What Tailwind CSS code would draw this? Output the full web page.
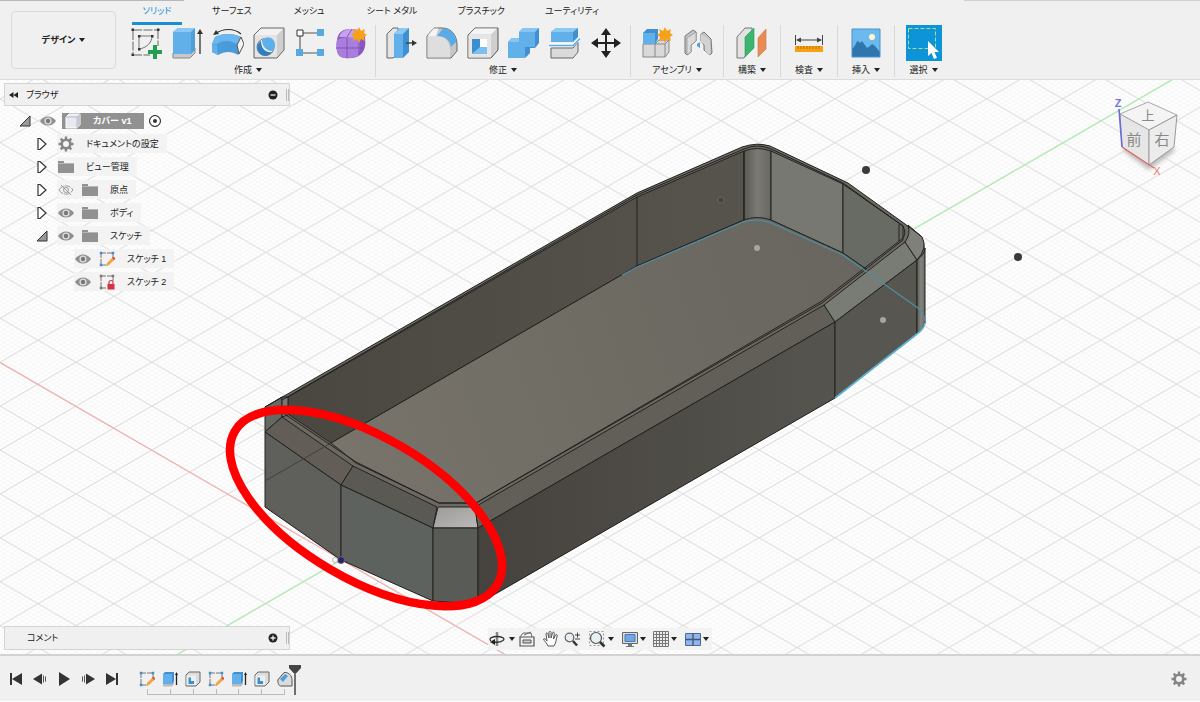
<!DOCTYPE html>
<html lang="ja">
<head>
<meta charset="utf-8">
<meta name="viewport" content="width=device-width, initial-scale=1">
<title>カバー v1</title>
<script src="https://cdn.jsdelivr.net/npm/@tailwindcss/browser@4"></script>
</head>
<body class="flex h-screen flex-col overflow-hidden bg-[#f0f0f0] font-['Liberation_Sans','Noto_Sans_CJK_JP',sans-serif] text-[9px] leading-3 text-[#222] [font-feature-settings:'palt']">

<!-- Shared icon definitions -->
<svg class="hidden" aria-hidden="true">
  <symbol id="i-down" viewBox="0 0 6 4"><path d="M0 0h6L3 4z" fill="#222"/></symbol>
  <symbol id="i-sketch-new" viewBox="0 0 32 32">
    <path d="M3 4v22M3 3h25M28 3v16M3 28h17" fill="none" stroke="#666" stroke-width="1" stroke-dasharray="9 1.5"/>
    <path d="M9 9h13c0 7-6 12-13 13z" fill="none" stroke="#777" stroke-width="1"/>
    <path d="M1.500 1.500h2.500v2.500h-2.500zM27 1.500h2.500v2.500h-2.500zM1.500 26.500h2.500v2.500h-2.500zM8 8h2.500v2.500h-2.500zM21 8h2.500v2.500h-2.500zM8 21h2.500v2.500h-2.500z" fill="#333"/>
    <path d="M23 18h4v5h5v4h-5v5h-4v-5h-5v-4h5z" fill="#1fa050"/>
  </symbol>
  <symbol id="i-extrude" viewBox="0 0 32 32">
    <path d="M2 26h18l4-5v5l-5 5H2z" fill="#c9c9c9" stroke="#888"/>
    <path d="M2 5l5-4h17v22l-4 4H2z" fill="#4f9fdc"/><path d="M2 5l5-4h17l-4 4z" fill="#8cc8f2"/><path d="M2 5h18v22H2z" fill="#62b0ea"/>
    <path d="M29 27V5" stroke="#333" stroke-width="1.300"/><path d="M26 7l3-5 3 5z" fill="#333"/>
  </symbol>
  <symbol id="i-revolve" viewBox="0 0 32 32">
    <path d="M3 7C11 1 22 1 29 7" fill="none" stroke="#333" stroke-width="1.200"/><path d="M1 8l3-5 3 4z" fill="#333"/>
    <path d="M0 17l3-7c8-4 18-4 26 0l2 9-5 9c-6-4-13-4-20 0l-6-3z" fill="#4a9bda"/><path d="M0 17l3-7c8-4 18-4 26 0l-4 7c-7-4-14-4-20 0z" fill="#6ab6ee"/><path d="M0 17l5 1 1 10-6-3z" fill="#62b0ea"/>
    <path d="M25 18l4-8 3 7-5 10z" fill="#f3f3f3" stroke="#555"/>
  </symbol>
  <symbol id="i-hole" viewBox="0 0 32 32">
    <path d="M1 8l7-7h23v22l-7 8H1z" fill="#cfcfcf"/><path d="M1 8l7-7h23l-7 7z" fill="#f1f1f1"/><path d="M1.500 8H24v22.500H1.500z" fill="#e4e4e4"/>
    <path d="M1 8l7-7h23v22l-7 8H1z" fill="none" stroke="#666"/>
    <circle cx="12.500" cy="20" r="8.500" fill="#eee" stroke="#777"/><path d="M8 14a8 8 0 1 0 11 11c-7 1-11-4-11-11z" fill="#2f7fc0"/><path d="M9 13a7.500 7.500 0 1 1 10 11c-6 0-10-5-10-11z" fill="#5fb0ea"/>
  </symbol>
  <symbol id="i-boxes" viewBox="0 0 32 32">
    <path d="M6 6h20M6 6v20M6 26h20" stroke="#555" stroke-width="1.100"/>
    <path d="M3 3h6v6H3z" fill="#fff" stroke="#333"/><path d="M23 2h7v7h-7zM2 22h7v7H2zM23 22h7v7h-7z" fill="#58a9e0"/>
  </symbol>
  <symbol id="i-form" viewBox="0 0 32 32">
    <path d="M2 13c1-8 6-11 14-11s13 3 14 8c1 8 0 14-5 18-5 4-14 4-19 2-5-3-5-11-4-17z" fill="#8a58c0"/>
    <path d="M2 13c3-3 19-4 22-1 2 4 1 14-1 17-5 2-13 3-17 1-5-3-5-11-4-17z" fill="#aa7fdc"/>
    <path d="M4 10c2-6 7-8 13-8 4 0 8 1 10 3l-4 7c-6-2-13-2-19-2z" fill="#c5a3ec"/>
    <path d="M1 21h28M12 11v20M12 10l5-8M24 12v16" stroke="#7d4bb5" stroke-width=".9" fill="none"/>
    <path d="M24 0l2 4 4-2-1 4 3 2-3 2 1 4-4-2-2 4-2-4-4 2 1-4-3-2 3-2-1-4 4 2z" fill="#f7a11b"/>
  </symbol>
  <symbol id="i-press" viewBox="0 0 32 32">
    <path d="M2 7l6-6h5v25l-5 5H2z" fill="#e4e4e4" stroke="#666"/><path d="M9 7l6-6h9v24l-6 6H9z" fill="#3f90d2"/><path d="M9 7h9v24H9z" fill="#62b0ea"/><path d="M9 7l6-6h9l-6 6z" fill="#8ccaf4"/>
    <path d="M21 16h7" stroke="#333" stroke-width="1.300"/><path d="M27 13l5 3-5 3z" fill="#333"/>
  </symbol>
  <symbol id="i-fillet" viewBox="0 0 32 32">
    <path d="M1 9l7-8h8c10 0 15 8 15 17v6l-6 7H1z" fill="#c6c6c6" stroke="#666"/><path d="M1.500 9H10c9 0 14 6 14 14v7.500H1.500z" fill="#dedede"/><path d="M1.500 9l6-7.500h5L10 9z" fill="#f4f4f4"/>
    <path d="M11 9l6-7.500c8 0 13 6 13.500 13L25 20c-1-7-6-11-14-11z" fill="#5aabe6"/>
  </symbol>
  <symbol id="i-shell" viewBox="0 0 32 32">
    <path d="M1 8l7-7h23v22l-7 8H1z" fill="#cfcfcf" stroke="#555"/><path d="M1.500 8H24v22.500H1.500z" fill="#e6e6e6"/><path d="M2 7.500l6-6h22l-6 6z" fill="#f5f5f5"/>
    <path d="M5 12h15v15H5z" fill="#fff"/><path d="M5 12h8v9l-8 6z" fill="#3a8fcf"/><path d="M5 27l8-7h7v7z" fill="#7cc0f2"/>
  </symbol>
  <symbol id="i-combine" viewBox="0 0 32 32">
    <path d="M0 15l4-4h7V5l4-4h16v15l-4 5h-5v5l-5 5H0z" fill="#3f90d2"/><path d="M0 15h11V5h16v15H17v11H0z" fill="#62b0ea"/><path d="M11 5l4-4h16l-4 4zM0 15l4-4h7v4z" fill="#86c6f3"/>
  </symbol>
  <symbol id="i-split" viewBox="0 0 32 32">
    <path d="M2 5l5-4h22v9l-5 5H2z" fill="#3f90d2"/><path d="M2 5h22v10H2z" fill="#62b0ea"/><path d="M2 5l5-4h22l-5 4z" fill="#8ccaf4"/>
    <path d="M2 21h22l5-6v10l-5 6H2z" fill="#dadada" stroke="#666"/><path d="M0 16.500h24l7-7v4l-7 6H0z" fill="#fff"/><path d="M0 18.500h24l7-7" stroke="#5aabe6" stroke-width="1.400" fill="none"/>
  </symbol>
  <symbol id="i-move" viewBox="0 0 32 32">
    <path d="M16 5v22M5 16h22" stroke="#222" stroke-width="2"/><path d="M16 1l5 7H11zM16 31l-5-7h10zM1 16l7-5v10zM31 16l-7 5V11z" fill="#222"/>
  </symbol>
  <symbol id="i-component" viewBox="0 0 32 32">
    <path d="M2 17h12l4-4h10v12l-4 5H2z" fill="#d9d9d9" stroke="#888"/><path d="M14 17v13M14 17h10l4-4M24 17v13" stroke="#888" fill="none"/>
    <path d="M2 6l4-4h11v10l-3 5H2z" fill="#3f90d2"/><path d="M2 6h12v11H2z" fill="#62b0ea"/>
    <path d="M24 0l2 4 4-2-1 4 3 2-3 2 1 4-4-2-2 4-2-4-4 2 1-4-3-2 3-2-1-4 4 2z" fill="#f7a11b"/>
  </symbol>
  <symbol id="i-joint" viewBox="0 0 32 32">
    <path d="M3 9l8-6 3 2v9l-5 4v7l-4 3-2-2z" fill="#c4c4c4" stroke="#777"/><path d="M5 11l9-6v9l-5 4v7l-4 3z" fill="#dadada" stroke="#888" stroke-width=".6"/>
    <path d="M29 12l-7-7-3 2v7l3 4v5l6 5 2-2z" fill="#c4c4c4" stroke="#777"/><path d="M28 13l-9-6v8l4 3v6l5 4z" fill="#d2d2d2"/><path d="M15 17l3-2v6l-3-2z" fill="#4f9fdc"/>
  </symbol>
  <symbol id="i-plane" viewBox="0 0 32 32">
    <path d="M1 10l8-9h7v19l-8 11H1z" fill="#e2e2e2" stroke="#777"/><path d="M9 10l9-9v20l-9 9z" fill="#3cb66e" stroke="#2f9a5a" stroke-width=".6"/><path d="M22 11l8-9v20l-8 8z" fill="#e88b55" stroke="#cf7540" stroke-width=".6"/>
  </symbol>
  <symbol id="i-measure" viewBox="0 0 32 32">
    <path d="M2.500 8v10M29.500 8v10M4 13h24" stroke="#444"/><path d="M3 13l5-2.500v5zM29 13l-5-2.500v5z" fill="#444"/><path d="M2 19h28v6H2z" fill="#f5a313"/><path d="M5 19v3M8 19v3M11 19v3M14 19v3M17 19v3M20 19v3M23 19v3M26 19v3" stroke="#a56500" stroke-width=".8"/>
  </symbol>
  <symbol id="i-image" viewBox="0 0 32 32">
    <path d="M2 2h28v28H2z" fill="#6cb9ee"/><path d="M2 22c4-3 4-8 6-8l2 2 2-2 5 7 3-2 2-2 3 2 5 6v5H2z" fill="#2e76ad"/><circle cx="22" cy="10" r="3" fill="#fff8cf"/><path d="M2 2h28v28H2z" fill="none" stroke="#4594cd"/>
  </symbol>
  <symbol id="i-select" viewBox="0 0 36 36">
    <path d="M0 0h36v36H0z" fill="#0c93d8"/><path d="M2.500 3.500h27v20h-27z" fill="none" stroke="#a3e28d" stroke-dasharray="4 2"/><path d="M22 16v15l3.500-3 2.500 6 3-1.300-2.600-5.700H33z" fill="#fff"/>
  </symbol>
  <symbol id="i-eye" viewBox="0 0 18 12"><path d="M1 6c4-6 12-6 16 0-4 6-12 6-16 0z" fill="#8f8f8f"/><circle cx="9" cy="6" r="3.600" fill="#ddd"/><circle cx="9" cy="6" r="2.200" fill="#777"/></symbol>
  <symbol id="i-eye-off" viewBox="0 0 18 12"><path d="M2 6c3.500-5.500 10.500-5.500 14 0-3.500 5.500-10.500 5.500-14 0z" fill="none" stroke="#999" stroke-dasharray="6 1"/><circle cx="9" cy="6" r="2.500" fill="none" stroke="#999"/><path d="M4 1l10 10" stroke="#999"/></symbol>
  <symbol id="i-folder" viewBox="0 0 18 14"><path d="M1 1h6v2h10v10H1z" fill="#919191"/><path d="M1 3.500h16" stroke="#b5b5b5"/></symbol>
  <symbol id="i-gear" viewBox="0 0 16 16"><circle cx="8" cy="8" r="4.300" fill="none" stroke="#858585" stroke-width="2.600"/><path d="M8 .5v3M8 12.500v3M.5 8h3M12.500 8h3M2.700 2.700l2.100 2.100M11.200 11.200l2.100 2.100M2.700 13.300l2.100-2.100M11.200 4.800l2.100-2.100" stroke="#858585" stroke-width="2.400"/></symbol>
  <symbol id="i-open" viewBox="0 0 12 12"><path d="M11 1v10H1z" fill="#999" stroke="#333"/></symbol>
  <symbol id="i-closed" viewBox="0 0 12 12"><path d="M2 .5v11h2L10 6 4 .5z" fill="#fff" stroke="#333" stroke-width="1.200"/></symbol>
  <symbol id="i-cube" viewBox="0 0 16 16"><path d="M1 4l3-3h11v11l-3 3H1z" fill="#e9e9f0" stroke="#fff"/><path d="M12 4v11M1 4h11l3-3" stroke="#b9b9c6" fill="none"/><path d="M12 4l3-3v11l-3 3z" fill="#c9c9d4"/></symbol>
  <symbol id="i-sk" viewBox="0 0 16 16"><path d="M2 2h12v8M2 2v12h7" fill="none" stroke="#777" stroke-dasharray="5 1"/><path d="M.8.800h2.500v2.500H.8zM12.700.800h2.500v2.500h-2.500zM.8 12.700h2.500v2.500H.8z" fill="#3d8fd0"/><path d="M7 15l1-3 6-6 2 2-6 6z" fill="#f2a53a"/><path d="M13 7l1.500-1.500 2 2L15 9z" fill="#e0503c"/></symbol>
  <symbol id="i-sk-lock" viewBox="0 0 16 16"><path d="M2 2h12v5M2 2v12h6" fill="none" stroke="#777" stroke-dasharray="5 1"/><path d="M.8.800h2.500v2.500H.8zM12.700.800h2.500v2.500h-2.500zM.8 12.700h2.500v2.500H.8z" fill="#777"/><path d="M8.500 10h7v5.500h-7z" fill="#d63342"/><path d="M10 10V8.500a2 2 0 0 1 4 0V10" fill="none" stroke="#d63342" stroke-width="1.200"/></symbol>
  <symbol id="i-tl-fillet" viewBox="0 0 16 16"><path d="M.8 9L7 1.500C12 1 15 5 15 9v6H4c-2 0-3-2-3.200-6z" fill="#dcdcdc" stroke="#555"/><path d="M3 8l5-5 3 2-5 6z" fill="#4f9fdc"/></symbol>
  <symbol id="i-tl-shell" viewBox="0 0 16 16"><path d="M1 4l3-3h11v10l-4 4H1z" fill="#dcdcdc" stroke="#666"/><path d="M1.500 4.500H11V14H1.500z" fill="#eee"/><path d="M3.500 6.500H6V10h3v3H3.500z" fill="#3a8fcf"/></symbol>
  <symbol id="i-tl-extrude" viewBox="0 0 16 16"><path d="M1 12h9l2-2v3l-2 2.500H1z" fill="#bbb"/><path d="M1 3l2-2h9v9l-2 3H1z" fill="#3f90d2"/><path d="M1 3h9v10H1z" fill="#62b0ea"/><path d="M14.500 14V3" stroke="#222" stroke-width="1.300"/><path d="M13 4l1.500-3L16 4z" fill="#222"/></symbol>
</svg>

<header class="relative flex h-20 shrink-0 border-b border-[#dcdcdc]">
  <div class="absolute top-0 left-0 h-px w-[184px] bg-[#b9b9b9]"></div>
  <div class="absolute top-0 right-0 h-px w-[236px] bg-[#d0d0d0]"></div>
  <button class="mt-[11px] ml-[11px] flex h-[58px] w-[105px] items-center justify-center gap-1 rounded-sm border border-[#dadada] font-bold">デザイン <svg class="h-1 w-1.5"><use href="#i-down"/></svg></button>
  <div class="ml-[9px] flex flex-col">
    <nav class="ml-[7px] flex h-[25px] gap-5" aria-label="タブ">
      <button class="w-[50px] border-b-[3px] border-[#1c8fd0] text-[#1c8fd0]">ソリッド</button>
      <button class="border-b-[3px] border-transparent px-[10px]">サーフェス</button>
      <button class="border-b-[3px] border-transparent px-3">メッシュ</button>
      <button class="border-b-[3px] border-transparent px-[10px]">シート メタル</button>
      <button class="border-b-[3px] border-transparent px-[10px]">プラスチック</button>
      <button class="border-b-[3px] border-transparent px-[10px]">ユーティリティ</button>
    </nav>
    <div class="flex h-[52px]">
      <section class="flex flex-col items-center gap-1 border-r border-[#d8d8d8] pr-1">
        <div class="flex h-[35px] items-center">
          <button class="flex w-[41px] justify-center" aria-label="スケッチを作成"><svg class="size-8"><use href="#i-sketch-new"/></svg></button>
          <button class="flex w-[41px] justify-center" aria-label="押し出し"><svg class="size-8"><use href="#i-extrude"/></svg></button>
          <button class="flex w-[41px] justify-center" aria-label="回転"><svg class="size-8"><use href="#i-revolve"/></svg></button>
          <button class="flex w-[41px] justify-center" aria-label="穴"><svg class="size-8"><use href="#i-hole"/></svg></button>
          <button class="flex w-[41px] justify-center" aria-label="パターン"><svg class="size-8"><use href="#i-boxes"/></svg></button>
          <button class="flex w-[41px] justify-center" aria-label="フォームを作成"><svg class="size-8"><use href="#i-form"/></svg></button>
        </div>
        <button class="flex items-center gap-1">作成 <svg class="h-1 w-1.5"><use href="#i-down"/></svg></button>
      </section>
      <section class="flex flex-col items-center gap-1 border-r border-[#d8d8d8] px-1">
        <div class="flex h-[35px] items-center">
          <button class="flex w-[41px] justify-center" aria-label="プレス/プル"><svg class="size-8"><use href="#i-press"/></svg></button>
          <button class="flex w-[41px] justify-center" aria-label="フィレット"><svg class="size-8"><use href="#i-fillet"/></svg></button>
          <button class="flex w-[41px] justify-center" aria-label="シェル"><svg class="size-8"><use href="#i-shell"/></svg></button>
          <button class="flex w-[41px] justify-center" aria-label="結合"><svg class="size-8"><use href="#i-combine"/></svg></button>
          <button class="flex w-[41px] justify-center" aria-label="分割"><svg class="size-8"><use href="#i-split"/></svg></button>
          <button class="flex w-[41px] justify-center" aria-label="移動"><svg class="size-8"><use href="#i-move"/></svg></button>
        </div>
        <button class="flex items-center gap-1">修正 <svg class="h-1 w-1.5"><use href="#i-down"/></svg></button>
      </section>
      <section class="flex flex-col items-center gap-1 border-r border-[#d8d8d8] px-[5px]">
        <div class="flex h-[35px] items-center">
          <button class="flex w-[41px] justify-center" aria-label="新規コンポーネント"><svg class="size-8"><use href="#i-component"/></svg></button>
          <button class="flex w-[41px] justify-center" aria-label="ジョイント"><svg class="size-8"><use href="#i-joint"/></svg></button>
        </div>
        <button class="flex items-center gap-1">アセンブリ <svg class="h-1 w-1.5"><use href="#i-down"/></svg></button>
      </section>
      <section class="flex w-[57px] flex-col items-center gap-1 border-r border-[#d8d8d8]">
        <button class="flex h-[35px] items-center" aria-label="オフセット平面"><svg class="size-8"><use href="#i-plane"/></svg></button>
        <button class="flex items-center gap-1">構築 <svg class="h-1 w-1.5"><use href="#i-down"/></svg></button>
      </section>
      <section class="flex w-[57px] flex-col items-center gap-1 border-r border-[#d8d8d8]">
        <button class="flex h-[35px] items-center" aria-label="計測"><svg class="size-8"><use href="#i-measure"/></svg></button>
        <button class="flex items-center gap-1">検査 <svg class="h-1 w-1.5"><use href="#i-down"/></svg></button>
      </section>
      <section class="flex w-[57px] flex-col items-center gap-1 border-r border-[#d8d8d8]">
        <button class="flex h-[35px] items-center" aria-label="キャンバスを挿入"><svg class="size-8"><use href="#i-image"/></svg></button>
        <button class="flex items-center gap-1">挿入 <svg class="h-1 w-1.5"><use href="#i-down"/></svg></button>
      </section>
      <section class="flex w-[57px] flex-col items-center gap-1">
        <button class="flex h-[35px] items-center" aria-label="選択ツール"><svg class="size-9"><use href="#i-select"/></svg></button>
        <button class="flex items-center gap-1">選択 <svg class="h-1 w-1.5"><use href="#i-down"/></svg></button>
      </section>
    </div>
  </div>
</header>

<main class="relative flex min-h-0 flex-1 flex-col justify-between bg-white">
  <!-- Model view -->
  <svg class="absolute inset-0 size-full" viewBox="0 80 1200 574" preserveAspectRatio="xMidYMid slice" role="img" aria-label="カバーの3Dモデル">
    <defs>
      <pattern id="minor" x="76" y="318.300" width="7.590" height="4.390" patternUnits="userSpaceOnUse"><path d="M0 0l7.590 4.390M0 4.390L7.590 0" stroke="#f0f0f0" stroke-width=".6"/></pattern>
      <pattern id="major" x="76" y="318.300" width="75.900" height="43.900" patternUnits="userSpaceOnUse"><path d="M0 0l75.900 43.900M0 43.900L75.900 0" stroke="#dadada" stroke-width="1"/></pattern>
      <linearGradient id="floor" x1="330" y1="440" x2="850" y2="260" gradientUnits="userSpaceOnUse"><stop offset="0" stop-color="#78746b"/><stop offset=".5" stop-color="#6f6c64"/><stop offset="1" stop-color="#68665f"/></linearGradient>
      <linearGradient id="wall" x1="288" x2="744" y1="0" y2="0" gradientUnits="userSpaceOnUse"><stop offset="0" stop-color="#4a4741"/><stop offset="1" stop-color="#57544e"/></linearGradient>
      <linearGradient id="round"><stop offset="0" stop-color="#5a5852"/><stop offset=".5" stop-color="#7b7a74"/><stop offset="1" stop-color="#666760"/></linearGradient>
      <linearGradient id="long" x1="478" x2="835" y1="0" y2="0" gradientUnits="userSpaceOnUse"><stop offset="0" stop-color="#46433e"/><stop offset="1" stop-color="#56544e"/></linearGradient>
      <linearGradient id="edge"><stop offset="0" stop-color="#5a5b56"/><stop offset=".5" stop-color="#85857f"/><stop offset="1" stop-color="#696963"/></linearGradient>
      <linearGradient id="facet" y2="1"><stop offset="0" stop-color="#9c9a98"/><stop offset="1" stop-color="#bcbab8"/></linearGradient>
    </defs>
    <path d="M0 80h1200v574H0z" fill="url(#minor)"/>
    <path d="M0 80h1200v574H0z" fill="url(#major)"/>
    <path d="M0 362.500L505 654.500" stroke="#f7aaaa" stroke-width="1.100"/>
    <path d="M178 654L1172 80" stroke="#a5f0a5" stroke-width="1.100"/>

    <path d="M265 407L637 193l105-46q15-5 28-1l78 37 57 41 16 12q4 6 4 14v74q-1 4-8 10l-82 64-357 206-45-3-92-41-76-53z" fill="#6b6962"/>
    <g stroke="#23221f" stroke-width="1" stroke-linejoin="round">
      <path d="M288 397L637 197l107-46v69l-107 46-306 177-43-29z" fill="url(#wall)"/>
      <path d="M744 151q13-5 27 0v70q-14-5-27 0z" fill="url(#round)"/>
      <path d="M771 151l72 33v69l-72-33z" fill="#767871"/>
      <path d="M843 184l60 42v14l-37 29-23-16z" fill="#686a64"/>
      <path d="M331 443l306-177 107-46q13-5 27 0l72 33 23 16-44 34-346 200h-37l-83-40z" fill="url(#floor)"/>
      <path d="M637 197v69M744 151v69" fill="none"/>
      <path d="M265 407l17-10v20l-17 15z" fill="#666963"/>
      <path d="M282 397h6v18l-6 2z" fill="#77756e"/>
      <path d="M265 432l17-15 71 49-12 19z" fill="#625d56"/>
      <path d="M353 466l84 41-4 21-92-43z" fill="#5b5954"/>
      <path d="M438 507h37l3 21h-45z" fill="url(#facet)"/>
      <path d="M475 507l349-202 11 17-357 206z" fill="#625f58"/>
      <path d="M824 305l81-63 12 18-82 62z" fill="#787c75"/>
      <path d="M905 242q6-8 3-17l14 12q6 11-5 23z" fill="#7f807a"/>
      <path d="M265 432l76 53v75l-76-53z" fill="#5f605b"/>
      <path d="M341 485l92 43v73l-92-41z" fill="#5d625e"/>
      <path d="M433 528h45v76l-45-3z" fill="#595b57"/>
      <path d="M478 528l357-206v76L478 604z" fill="url(#long)"/>
      <path d="M835 322l82-62v74l-82 64z" fill="#575650"/>
      <path d="M917 260q8-6 8-12v75q-1 5-8 11z" fill="url(#edge)"/>
      <path d="M283 413l73 49 83 41h37l346-202 80-62q5-5 1-13l-60-43-72-34q-14-6-27 0l-107 46-355 205M899 224v17" fill="none"/>
      <path d="M265 407L637 193l105-46q15-5 28-1l78 37 57 41 16 12" fill="none"/>
      <path d="M265 481l66-38" fill="none" stroke="#40413d"/>
    </g>
    <path d="M622 275l15-8 106-45q14-4 28 1l72 32 75 53q7 6 7 14" fill="none" stroke="#4e8da0" stroke-width="1.300"/>
    <path d="M835 398l82-64q7-5 8-11" fill="none" stroke="#5eb2d4" stroke-width="1.600"/>
    <g><circle cx="866" cy="170" r="4" fill="#3a3a3a"/><circle cx="1018" cy="257" r="4" fill="#3a3a3a"/><circle cx="757" cy="248" r="3" fill="#a6a5a0"/><circle cx="883" cy="320" r="3" fill="#a6a5a0"/><circle cx="721" cy="200" r="3" fill="#45423d" stroke="#68655e"/></g>
    <circle cx="341" cy="560" r="3.500" fill="#2b2450" stroke="#6a5aa8"/><circle cx="335" cy="560" r="2.500" fill="none" stroke="#bbb"/>
    <ellipse cx="366" cy="508" rx="152" ry="71" transform="rotate(30.300 366 508)" fill="none" stroke="#fe0000" stroke-width="8.500"/>
  </svg>

  <!-- View cube -->
  <svg class="absolute top-3 right-4 h-[88px] w-[76px]" viewBox="1108 92 76 88" role="img" aria-label="ビューキューブ">
    <defs><filter id="soft"><feGaussianBlur stdDeviation="2"/></filter></defs>
    <path d="M1122 150l27 20 27-20-27-14z" fill="#bbb" filter="url(#soft)"/>
    <path d="M1120 114l28-12 29 13-28 15z" fill="#f4f4f4" stroke="#aaa"/>
    <path d="M1120 114l29 16v35l-27-18z" fill="#e6e6e6" stroke="#aaa"/>
    <path d="M1149 130l28-15-3 32-25 18z" fill="#ececec" stroke="#999"/>
    <path d="M1119 109l3 38" stroke="#6a6adf" stroke-width="1.600"/><path d="M1122 147l32 21" stroke="#e06a6a" stroke-width="1.400"/>
    <g text-anchor="middle" fill="#888">
      <text x="1148" y="120" font-size="13">上</text><text x="1134" y="145" font-size="15">前</text><text x="1162" y="145" font-size="15">右</text>
      <text x="1118" y="107" font-size="11" font-weight="700" fill="#7373e6">Z</text><text x="1157" y="175" font-size="11" fill="#ee7777">X</text>
    </g>
  </svg>

  <!-- Browser -->
  <aside class="relative w-[290px] pt-[3px]">
    <div class="ml-1 flex h-[23px] items-center border border-[#d4d4d4] bg-[#f0f0f0] pl-1">
      <button class="flex" aria-label="折りたたむ"><svg class="h-2 w-[9px]" viewBox="0 0 9 8"><path d="M4.500 1v6L0 4zM9 1v6L4.500 4z" fill="#222"/></svg></button>
      <h2 class="ml-2 flex-1">ブラウザ</h2>
      <button class="mr-2" aria-label="最小化"><svg class="size-2.5" viewBox="0 0 10 10"><circle cx="5" cy="5" r="4.500" fill="#222"/><path d="M2.500 5h5" stroke="#eee" stroke-width="1.300"/></svg></button>
      <span class="h-3 w-[3px] border-x border-[#bbb]"></span>
    </div>
    <ul class="pt-[3px]">
      <li class="flex h-[23px] items-center pl-4">
        <button class="flex w-[18px] justify-center" aria-label="閉じる"><svg class="size-3"><use href="#i-open"/></svg></button>
        <div class="ml-[5px] flex h-[19px] items-center gap-[5px]">
          <button class="flex" aria-label="表示"><svg class="h-3 w-[18px]"><use href="#i-eye"/></svg></button>
          <label for="active" class="flex h-4 w-[82px] items-center gap-3 bg-[#919191] pl-[3px] font-bold text-white"><svg class="size-4"><use href="#i-cube"/></svg>カバー v1</label>
          <input id="active" type="radio" checked class="size-3 appearance-none rounded-full border border-[#333] bg-[#333] shadow-[inset_0_0_0_3px_white]">
        </div>
      </li>
      <li class="flex h-[23px] items-center pl-[33px]">
        <button class="flex w-[18px] justify-center" aria-label="開く"><svg class="size-3"><use href="#i-closed"/></svg></button>
        <div class="ml-1.5 flex h-[19px] items-center gap-1.5 bg-[#f3f3f3] pr-2"><svg class="h-4 w-[18px]"><use href="#i-gear"/></svg><span class="pl-[5px]">ドキュメントの設定</span></div>
      </li>
      <li class="flex h-[23px] items-center pl-[33px]">
        <button class="flex w-[18px] justify-center" aria-label="開く"><svg class="size-3"><use href="#i-closed"/></svg></button>
        <div class="ml-1.5 flex h-[19px] items-center gap-1.5 bg-[#f3f3f3] pr-2"><svg class="h-3.5 w-[18px]"><use href="#i-folder"/></svg><span class="pl-[5px]">ビュー管理</span></div>
      </li>
      <li class="flex h-[23px] items-center pl-[33px]">
        <button class="flex w-[18px] justify-center" aria-label="開く"><svg class="size-3"><use href="#i-closed"/></svg></button>
        <div class="ml-1.5 flex h-[19px] items-center gap-1.5 bg-[#f3f3f3] pr-2"><button class="flex" aria-label="非表示"><svg class="h-3 w-[18px]"><use href="#i-eye-off"/></svg></button><svg class="h-3.5 w-[18px]"><use href="#i-folder"/></svg><span class="pl-[5px]">原点</span></div>
      </li>
      <li class="flex h-[23px] items-center pl-[33px]">
        <button class="flex w-[18px] justify-center" aria-label="開く"><svg class="size-3"><use href="#i-closed"/></svg></button>
        <div class="ml-1.5 flex h-[19px] items-center gap-1.5 bg-[#f3f3f3] pr-2"><button class="flex" aria-label="表示"><svg class="h-3 w-[18px]"><use href="#i-eye"/></svg></button><svg class="h-3.5 w-[18px]"><use href="#i-folder"/></svg><span class="pl-[5px]">ボディ</span></div>
      </li>
      <li class="flex h-[23px] items-center pl-[33px]">
        <button class="flex w-[18px] justify-center" aria-label="閉じる"><svg class="size-3"><use href="#i-open"/></svg></button>
        <div class="ml-1.5 flex h-[19px] items-center gap-1.5 bg-[#f3f3f3] pr-2"><button class="flex" aria-label="表示"><svg class="h-3 w-[18px]"><use href="#i-eye"/></svg></button><svg class="h-3.5 w-[18px]"><use href="#i-folder"/></svg><span class="pl-[5px]">スケッチ</span></div>
      </li>
      <li class="flex h-[23px] items-center pl-[74px]">
        <div class="flex h-[19px] items-center gap-1.5 bg-[#f3f3f3] pr-2"><button class="flex" aria-label="表示"><svg class="h-3 w-[18px]"><use href="#i-eye"/></svg></button><svg class="h-4 w-[18px]"><use href="#i-sk"/></svg><span class="pl-[5px]">スケッチ 1</span></div>
      </li>
      <li class="flex h-[23px] items-center pl-[74px]">
        <div class="flex h-[19px] items-center gap-1.5 bg-[#f3f3f3] pr-2"><button class="flex" aria-label="表示"><svg class="h-3 w-[18px]"><use href="#i-eye"/></svg></button><svg class="h-4 w-[18px]"><use href="#i-sk-lock"/></svg><span class="pl-[5px]">スケッチ 2</span></div>
      </li>
    </ul>
  </aside>

  <section class="relative mb-1 ml-1 flex h-6 w-[286px] items-center border border-[#d4d4d4] bg-[#f0f0f0] pl-[22px]">
    <h2 class="flex-1">コメント</h2>
    <button class="mr-2" aria-label="コメントを追加"><svg class="size-2.5" viewBox="0 0 10 10"><circle cx="5" cy="5" r="4.500" fill="#222"/><path d="M2.500 5h5M5 2.500v5" stroke="#eee" stroke-width="1.300"/></svg></button>
    <span class="h-3 w-[3px] border-x border-[#bbb]"></span>
  </section>

  <!-- Navigation bar -->
  <div class="absolute bottom-1 left-1/2 flex h-[22px] w-[224px] -translate-x-1/2 items-center justify-between bg-[#f3f3f3] pr-[3px]" role="toolbar" aria-label="ナビゲーション">
    <button class="flex items-center gap-[3px]" aria-label="オービット"><svg class="size-[18px]" viewBox="0 0 18 18"><path d="M9 2v14" stroke="#888" stroke-width="2.500"/><path d="M3 11C0 8 5 6.500 9 6.500S18 8 15 10.500c-2 1.500-6 2-10 1.500" fill="none" stroke="#333" stroke-width="1.300"/><path d="M2 12l5-3v6z" fill="#222"/></svg><svg class="h-1 w-1.5"><use href="#i-down"/></svg></button>
    <button aria-label="ビュー正面"><svg class="size-[18px]" viewBox="0 0 18 18"><path d="M2 7h14v9H2z" fill="#eee" stroke="#555" stroke-width="1.200"/><path d="M5 10h8v3H5z" fill="#ccc" stroke="#555"/><path d="M2 7l3-4h8l1 4M6 5l7-3" fill="none" stroke="#666"/></svg></button>
    <button class="ml-1" aria-label="画面移動"><svg class="size-[18px]" viewBox="0 0 18 18"><path d="M6 16c-1-3-4-5-4.500-7 1-1 2 0 3.500 2L4 4c0-1.500 1.600-1.500 2 0l1 4V2.500c0-1.500 2-1.500 2 0V8l1.500-5c.5-1.500 2-1 1.800.5L11.500 9l2-4c.8-1 2-.5 1.700.8C14 10 14 13 12 16z" fill="#fff" stroke="#555"/></svg></button>
    <button aria-label="ズーム"><svg class="size-[18px]" viewBox="0 0 18 18"><circle cx="6.500" cy="7.500" r="4.300" fill="#e7f1f3" stroke="#666" stroke-width="1.200"/><path d="M10 11l4 4.500" stroke="#333" stroke-width="2.400"/><path d="M12 5h5M14.500 2.500v5M12 9h5" stroke="#444"/></svg></button>
    <button class="ml-1 flex items-center gap-[2px]" aria-label="フィット"><svg class="size-[18px]" viewBox="0 0 18 18"><path d="M1.500 1.500h14v14h-14z" fill="none" stroke="#999" stroke-dasharray="2 2"/><circle cx="8" cy="8" r="5.500" fill="#e7f1f3" stroke="#555" stroke-width="1.200"/><path d="M12 12l4.500 4.500" stroke="#333" stroke-width="2.600"/></svg><svg class="h-1 w-1.5"><use href="#i-down"/></svg></button>
    <button class="ml-1 flex items-center gap-px" aria-label="表示設定"><svg class="size-[18px]" viewBox="0 0 18 18"><path d="M1.500 2.500h15v11h-15z" fill="#ddd" stroke="#666"/><path d="M4 4.500h10v7H4z" fill="#72a7e0" stroke="#4778b8"/><path d="M7 13.500h4V16h2v1H5v-1h2z" fill="#777"/></svg><svg class="h-1 w-1.5"><use href="#i-down"/></svg></button>
    <button class="ml-1 flex items-center gap-px" aria-label="グリッドとスナップ"><svg class="size-[18px]" viewBox="0 0 18 18"><path d="M1.500 1.500h15v15h-15zM4.500 1.500v15M7.500 1.500v15M10.500 1.500v15M13.500 1.500v15M1.500 4.500h15M1.500 7.500h15M1.500 10.500h15M1.500 13.500h15" fill="#eee" stroke="#777"/></svg><svg class="h-1 w-1.5"><use href="#i-down"/></svg></button>
    <button class="ml-1 flex items-center gap-px" aria-label="ビューポート"><svg class="size-[18px]" viewBox="0 0 18 18"><path d="M1.500 3.500h15v12h-15z" fill="#8fb5ea" stroke="#4c6a96"/><path d="M9 3.500v12M1.500 9.500h15" stroke="#3f567c" stroke-width="1.400"/></svg><svg class="h-1 w-1.5"><use href="#i-down"/></svg></button>
  </div>
</main>

<!-- Timeline -->
<footer class="flex h-12 shrink-0 items-center border-t-2 border-b border-t-[#d2d2d2] border-b-white pr-[13px] pl-1">
  <div class="flex">
    <button class="flex w-6 justify-center" aria-label="先頭へ"><svg class="size-4" viewBox="0 0 16 16"><path d="M3 2v12" stroke="#333" stroke-width="2"/><path d="M14 2v12L4 8z" fill="#333"/></svg></button>
    <button class="flex w-6 justify-center" aria-label="前へ"><svg class="size-4" viewBox="0 0 16 16"><path d="M10 2.500v11L1 8z" fill="#333"/><path d="M11.500 4.500v7M13.500 5.500v5" stroke="#555"/></svg></button>
    <button class="flex w-6 justify-center" aria-label="再生"><svg class="size-4" viewBox="0 0 16 16"><path d="M3 1v14l11-7z" fill="#333"/></svg></button>
    <button class="flex w-6 justify-center" aria-label="次へ"><svg class="size-4" viewBox="0 0 16 16"><path d="M6 2.500v11L15 8z" fill="#333"/><path d="M4.500 4.500v7M2.500 5.500v5" stroke="#555"/></svg></button>
    <button class="flex w-6 justify-center" aria-label="末尾へ"><svg class="size-4" viewBox="0 0 16 16"><path d="M13 2v12" stroke="#333" stroke-width="2"/><path d="M2 2v12l10-6z" fill="#333"/></svg></button>
  </div>
  <div class="relative ml-[11px] flex">
    <button class="flex w-[23px] justify-center" aria-label="スケッチ 1"><svg class="size-4"><use href="#i-sk"/></svg></button>
    <button class="flex w-[23px] justify-center" aria-label="押し出し 1"><svg class="size-4"><use href="#i-tl-extrude"/></svg></button>
    <button class="flex w-[23px] justify-center" aria-label="シェル 1"><svg class="size-4"><use href="#i-tl-shell"/></svg></button>
    <button class="flex w-[23px] justify-center" aria-label="スケッチ 2"><svg class="size-4"><use href="#i-sk"/></svg></button>
    <button class="flex w-[23px] justify-center" aria-label="押し出し 2"><svg class="size-4"><use href="#i-tl-extrude"/></svg></button>
    <button class="flex w-[23px] justify-center" aria-label="シェル 2"><svg class="size-4"><use href="#i-tl-shell"/></svg></button>
    <button class="flex w-[23px] justify-center" aria-label="フィレット 1"><svg class="size-4"><use href="#i-tl-fillet"/></svg></button>
    <svg class="absolute top-[-6px] left-0 h-9 w-[170px]" viewBox="0 0 170 36"><path d="M12.500 24v5.500h137V24M35.500 24v5M58.500 24v5M81.500 24v5M103.500 24v5M126.500 24v5" fill="none" stroke="#bbb"/><path d="M154 0h12v3l-4.500 5h-3L154 3z" fill="#444"/><path d="M160 6v24" stroke="#444" stroke-width="1.500"/></svg>
  </div>
  <button class="ml-auto flex" aria-label="設定"><svg class="size-4"><use href="#i-gear"/></svg></button>
</footer>
</body>
</html>
